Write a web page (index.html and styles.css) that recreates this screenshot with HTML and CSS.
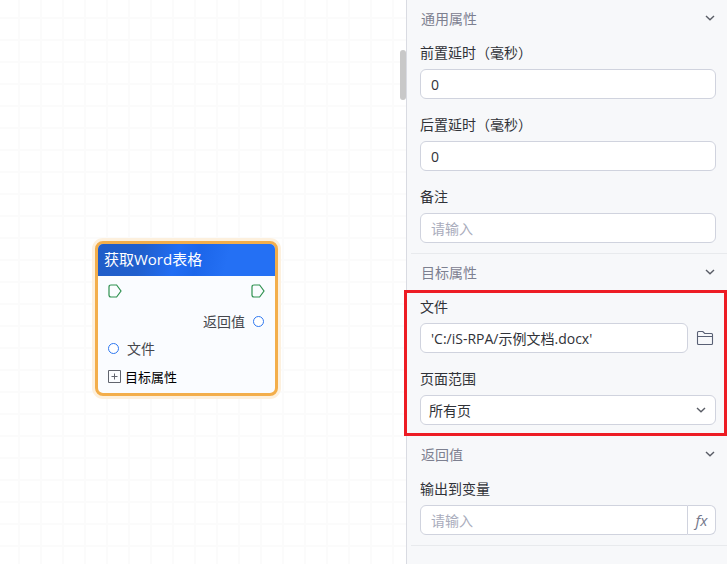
FILE: index.html
```
<!DOCTYPE html>
<html lang="zh-CN">
<head>
    <meta charset="UTF-8">
    <meta name="viewport" content="width=device-width, initial-scale=1.0">
    <title>获取Word表格</title>
    <link rel="stylesheet" href="styles.css">
</head>
<body>
    <div class="app">
        <!-- canvas -->
        <main class="canvas">
            <div class="node">
                <div class="node-title">获取Word表格</div>
                <div class="node-body">
                    <div class="node-row flow">
                        <svg class="flow-port" viewBox="0 0 14 14"><path d="M3 1h5.600L13 7l-4.400 6H3Q1 13 1 11V3Q1 1 3 1z"/></svg>
                        <svg class="flow-port" viewBox="0 0 14 14"><path d="M3 1h5.600L13 7l-4.400 6H3Q1 13 1 11V3Q1 1 3 1z"/></svg>
                    </div>
                    <div class="node-row output">
                        <span>返回值</span>
                        <i class="port"></i>
                    </div>
                    <div class="node-row input">
                        <i class="port"></i>
                        <span>文件</span>
                    </div>
                    <button class="node-row expand" type="button">
                        <svg viewBox="0 0 13 13"><path d="M.5.5h12v12H.5zM3.500 6.500h6M6.500 3.500v6"/></svg>
                        <span>目标属性</span>
                    </button>
                </div>
            </div>
            <div class="scroll-thumb"></div>
        </main>

        <!-- properties -->
        <aside class="panel">
            <section class="group">
                <button class="group-title" type="button">
                    <span>通用属性</span>
                    <svg class="arrow" viewBox="0 0 10 6"><path d="M1 1l4 3.800L9 1"/></svg>
                </button>
                <div class="fields">
                    <div class="field">
                        <label for="before">前置延时（毫秒）</label>
                        <input class="box" id="before" type="text" value="0">
                    </div>
                    <div class="field">
                        <label for="after">后置延时（毫秒）</label>
                        <input class="box" id="after" type="text" value="0">
                    </div>
                    <div class="field">
                        <label for="remark">备注</label>
                        <input class="box" id="remark" type="text" placeholder="请输入">
                    </div>
                </div>
            </section>

            <section class="group">
                <button class="group-title" type="button">
                    <span>目标属性</span>
                    <svg class="arrow" viewBox="0 0 10 6"><path d="M1 1l4 3.800L9 1"/></svg>
                </button>
                <div class="fields marked">
                    <div class="field">
                        <label for="file">文件</label>
                        <div class="file-row">
                            <input class="box" id="file" type="text" value="'C:/iS-RPA/示例文档.docx'">
                            <button class="folder" type="button" aria-label="选择文件">
                                <svg viewBox="0 0 18 16"><path d="M1.500 6.500h15M1.500 13V2.500q0-1 1-1h4.300l1.900 2h6.800q1 0 1 1V13.500q0 1-1 1h-13q-1 0-1-1z"/></svg>
                            </button>
                        </div>
                    </div>
                    <div class="field">
                        <label for="range">页面范围</label>
                        <div class="select-wrap">
                            <select class="box" id="range">
                                <option>所有页</option>
                            </select>
                            <svg class="arrow" viewBox="0 0 10 6"><path d="M1 1l4 3.800L9 1"/></svg>
                        </div>
                    </div>
                </div>
            </section>

            <section class="group">
                <button class="group-title" type="button">
                    <span>返回值</span>
                    <svg class="arrow" viewBox="0 0 10 6"><path d="M1 1l4 3.800L9 1"/></svg>
                </button>
                <div class="fields">
                    <div class="field">
                        <label for="variable">输出到变量</label>
                        <div class="joined">
                            <input class="box" id="variable" type="text" placeholder="请输入">
                            <button class="fx" type="button">fx</button>
                        </div>
                    </div>
                </div>
            </section>
        </aside>
    </div>
</body>
</html>
```
FILE: styles.css
```
* {
    margin: 0;
    padding: 0;
    box-sizing: border-box;
}
html, body {
    height: 100%;
}
body, button, input, select {
    font-family: "Open Sans", "Noto Sans CJK SC", sans-serif;
    font-size: 14px;
    color: #303238;
}
button {
    border: none;
    background: none;
    cursor: pointer;
}
svg {
    display: block;
    fill: none;
}
.app {
    display: flex;
    min-height: 100%;
    overflow: hidden;
}

/* canvas */
.canvas {
    position: relative;
    flex: 1;
    background-color: white;
    background-image:
        linear-gradient(to right, #fbfbfb 2px, transparent 2px),
        linear-gradient(#fbfbfb 2px, transparent 2px);
    background-size: 22px 22px;
    background-position: 18px 17px;
}
.node {
    position: absolute;
    left: 95px;
    top: 241px;
    width: 183px;
    border: 3px solid #f3ae4b;
    border-radius: 8px;
    box-shadow: 0 0 0 3px #fdf0dd;
    background-color: #fafcff;
}
.node-title {
    height: 32px;
    padding-left: 6px;
    border-radius: 5px 5px 0 0;
    background: linear-gradient(105deg, #205dc8 0%, #205fcd 25%, #216df3 44%, #1c66ea 56%, #2470f4 72%, #2470f4 100%);
    color: white;
    font-size: 15px;
    line-height: 30px;
}
.node-body {
    padding: 4px 10px 0;
}
.node-row {
    display: flex;
    align-items: center;
    color: #45474d;
}
.flow {
    height: 22px;
    justify-content: space-between;
}
.flow-port {
    width: 14px;
    height: 14px;
    stroke: #2f9150;
    stroke-width: 1.2;
}
.output {
    height: 38px;
    padding-right: 1px;
    justify-content: flex-end;
    gap: 8px;
}
.input {
    height: 16px;
    gap: 8px;
}
.port {
    width: 11px;
    height: 11px;
    border: 1px solid #2e78f0;
    border-radius: 50%;
    background-color: white;
}
.expand {
    height: 37px;
    padding-top: 4px;
    gap: 4px;
}
.expand svg {
    width: 13px;
    height: 13px;
    stroke: #60646e;
}
.expand span {
    color: black;
    font-size: 13px;
}
.scroll-thumb {
    position: absolute;
    right: 0;
    top: 50px;
    width: 6px;
    height: 50px;
    border-radius: 3px;
    background-color: #c8c8c8;
}

/* properties */
.panel {
    width: 321px;
    padding-left: 4px;
    border-left: 1px solid #d9dbe2;
    background-color: #f7f8fa;
}
.group {
    border-bottom: 1px solid #e8eaed;
}
.group-title {
    display: flex;
    align-items: center;
    justify-content: space-between;
    width: 100%;
    height: 38px;
    padding: 0 12px 2px 10px;
}
.group-title span {
    color: #7d8090;
}
.arrow {
    width: 10px;
    height: 6px;
    stroke: #5a5d66;
    stroke-width: 1.4;
}
.fields {
    display: flex;
    flex-direction: column;
    gap: 16px;
    padding: 5px 11px 10px 9px;
}
.field label {
    display: block;
    height: 20px;
    margin-bottom: 6px;
    line-height: 20px;
}
.box {
    display: block;
    width: 100%;
    height: 30px;
    padding: 0 10px;
    border: 1px solid #d0d3de;
    border-radius: 6px;
    background-color: white;
    outline: none;
}
.box::placeholder {
    color: #a9acbc;
}
.marked {
    position: relative;
}
.marked::after {
    content: "";
    position: absolute;
    top: -2px;
    right: 0;
    bottom: -1px;
    left: -7px;
    border: 3px solid #ed1c24;
    pointer-events: none;
}
.file-row {
    display: flex;
    align-items: center;
    gap: 8px;
}
.file-row .box, .joined .box {
    flex: 1;
    min-width: 0;
}
.folder {
    width: 20px;
}
.folder svg {
    width: 18px;
    height: 16px;
    stroke: #596074;
    stroke-width: 1.1;
}
.select-wrap {
    position: relative;
}
.select-wrap .box {
    padding: 0 28px 0 8px;
    appearance: none;
}
.select-wrap .arrow {
    position: absolute;
    top: 12px;
    right: 10px;
    pointer-events: none;
}
.joined {
    display: flex;
}
.joined .box {
    border-radius: 6px 0 0 6px;
}
.fx {
    width: 28px;
    height: 30px;
    border: 1px solid #d0d3de;
    border-left: none;
    border-radius: 0 6px 6px 0;
    background-color: white;
    color: #73778a;
    font-size: 15px;
    font-style: italic;
    line-height: 26px;
}
```
